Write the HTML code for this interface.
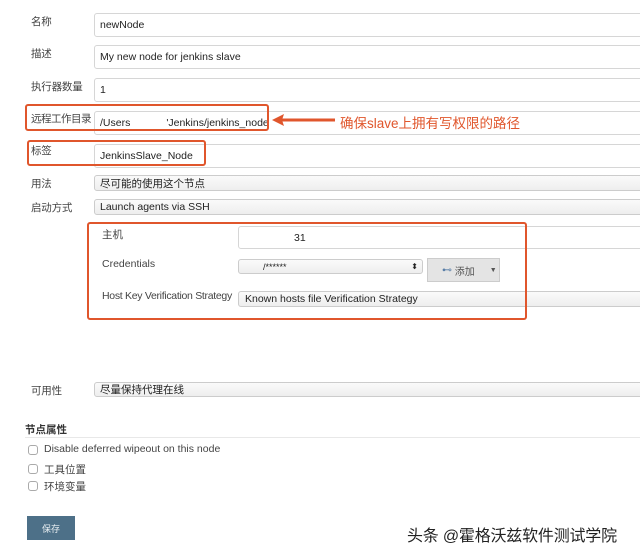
<!DOCTYPE html>
<html><head><meta charset="utf-8"><style>
body{margin:0;width:640px;height:552px;background:#fff;position:relative;overflow:hidden;font-family:"Liberation Sans","Noto Sans CJK SC",sans-serif;color:#333;font-size:10.5px}
.a{position:absolute}
.lbl{position:absolute;left:31px;font-size:10.5px;color:#444;letter-spacing:-0.2px}
.in{position:absolute;left:94px;right:-4px;border:1px solid #d6d6d6;border-radius:3px;background:#fff;box-sizing:border-box;padding-left:5px;display:flex;align-items:center;font-size:10.5px;color:#222}
.sel{background:linear-gradient(#fafafa,#eee);border-color:#ccc}
.red{position:absolute;border:2px solid #e0562c;border-radius:3px;box-sizing:border-box}
.cb{position:absolute;left:28px;width:8px;height:8px;border:1px solid #aaa;border-radius:3px;background:#fff}
</style></head><body>
<div class="lbl" style="top:14px">名称</div>
<div class="in" style="top:13px;height:24px">newNode</div>
<div class="lbl" style="top:46px">描述</div>
<div class="in" style="top:45px;height:24px">My new node for jenkins slave</div>
<div class="lbl" style="top:79px">执行器数量</div>
<div class="in" style="top:78px;height:24px">1</div>
<div class="lbl" style="top:111px;font-size:10.5px;letter-spacing:-0.5px">远程工作目录</div>
<div class="in" style="top:111px;height:24px">/Users<span style="display:inline-block;width:36px"></span>'Jenkins/jenkins_node</div>
<div class="red" style="left:25px;top:104px;width:244px;height:27px"></div>
<svg class="a" style="left:271px;top:114px" width="66" height="12"><path d="M10 6 H64" stroke="#e0562c" stroke-width="3"/><path d="M1 6 L13 0 L11 6 L13 12Z" fill="#e0562c"/></svg>
<div class="a" style="left:340px;top:112px;font-size:13.5px;color:#e0562c">确保slave上拥有写权限的路径</div>
<div class="lbl" style="top:143px">标签</div>
<div class="in" style="top:144px;height:24px">JenkinsSlave_Node</div>
<div class="red" style="left:27px;top:140px;width:179px;height:26px"></div>
<div class="lbl" style="top:176px">用法</div>
<div class="in sel" style="top:175px;height:16px">尽可能的使用这个节点</div>
<div class="lbl" style="top:200px">启动方式</div>
<div class="in sel" style="top:199px;height:16px">Launch agents via SSH</div>
<div class="a" style="left:102px;top:227px;font-size:10.5px;color:#444">主机</div>
<div class="in" style="left:238px;top:226px;height:23px;padding-left:55px">31</div>
<div class="a" style="left:102px;top:258px;font-size:10.5px;color:#444">Credentials</div>
<div class="in sel" style="left:238px;right:auto;width:185px;top:259px;height:15px;font-size:9px;padding-left:24px">/******<span style="position:absolute;right:4px;font-size:8px">⬍</span></div>
<div class="a" style="left:427px;top:258px;width:73px;height:24px;background:#e4e4e4;border:1px solid #ccc;box-sizing:border-box;font-size:10px;color:#555;display:flex;align-items:center"><span style="color:#5a7fa8;margin-left:14px">⊷</span>&nbsp;添加<span style="margin-left:15px;font-size:7px">▼</span></div>
<div class="a" style="left:102px;top:290px;font-size:10.5px;color:#444;letter-spacing:-0.3px;white-space:nowrap">Host Key Verification Strategy</div>
<div class="in sel" style="left:238px;top:291px;height:16px;padding-left:6px">Known hosts file Verification Strategy</div>
<div class="red" style="left:87px;top:222px;width:440px;height:98px"></div>
<div class="lbl" style="top:383px">可用性</div>
<div class="in sel" style="top:382px;height:15px">尽量保持代理在线</div>
<div class="a" style="left:25px;top:422px;font-size:10.5px;font-weight:bold;color:#333">节点属性</div>
<div class="a" style="left:25px;right:0;top:437px;height:1px;background:#e8e8e8"></div>
<div class="cb" style="top:445px"></div><div class="a" style="left:44px;top:443px;font-size:10.5px;color:#444">Disable deferred wipeout on this node</div>
<div class="cb" style="top:464px"></div><div class="a" style="left:44px;top:462px;font-size:10.5px;color:#444">工具位置</div>
<div class="cb" style="top:481px"></div><div class="a" style="left:44px;top:479px;font-size:10.5px;color:#444">环境变量</div>
<div class="a" style="left:27px;top:516px;width:48px;height:24px;background:#4d7088;color:#e8eef2;font-size:9px;display:flex;align-items:center;justify-content:center">保存</div>
<div class="a" style="left:407px;top:522px;font-size:16px;color:#222;letter-spacing:-0.2px">头条 @霍格沃兹软件测试学院</div>
</body></html>
